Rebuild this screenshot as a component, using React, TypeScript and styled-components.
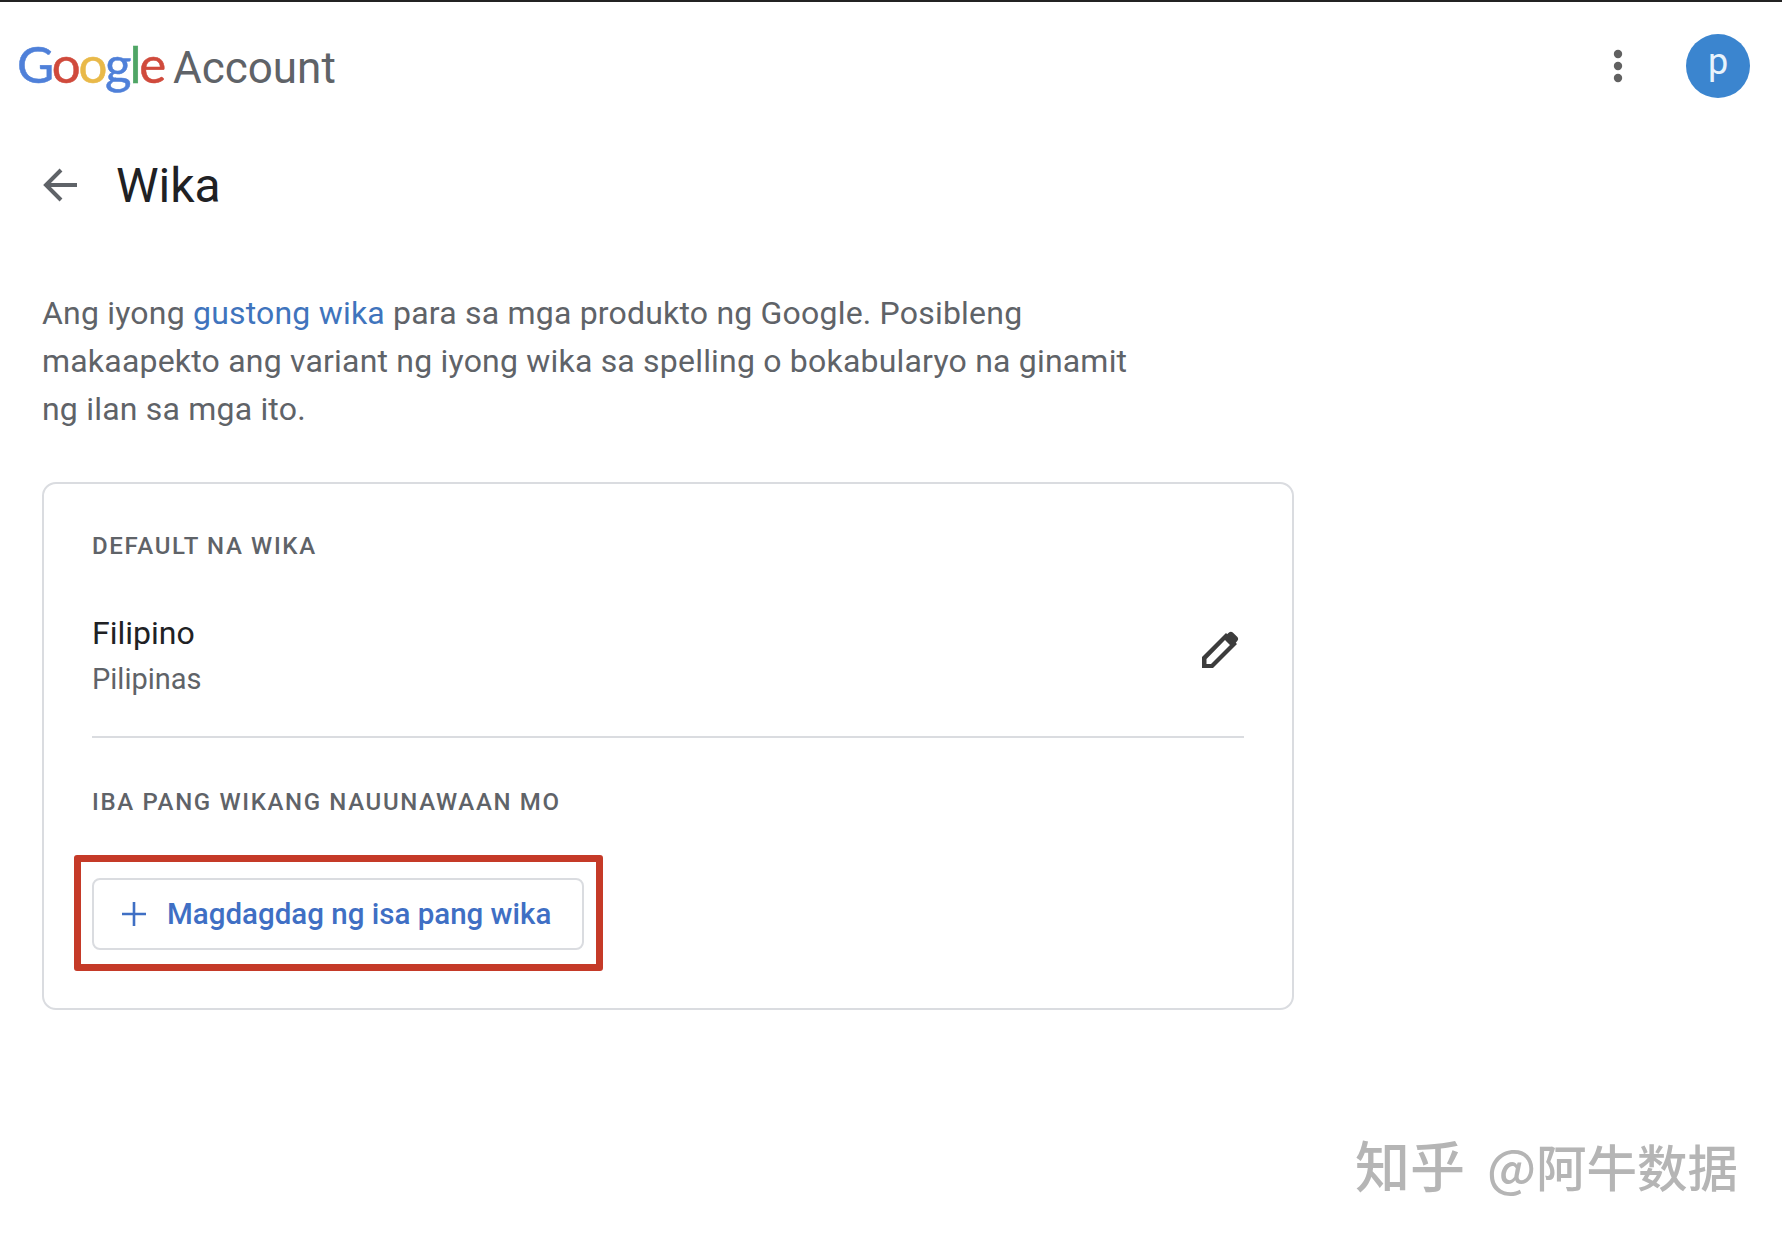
import React from "react";
import styled, { createGlobalStyle } from "styled-components";

const Global = createGlobalStyle`
  html, body { margin: 0; padding: 0; background: #fff; }
  body { font-family: Roboto, "Liberation Sans", sans-serif; }
`;

const Page = styled.div`
  position: relative;
  width: 1782px;
  height: 1240px;
  box-sizing: border-box;
  border-top: 2px solid #232323;
  overflow: hidden;
  background: #fff;
`;

const Header = styled.header`
  display: flex;
  align-items: center;
  justify-content: space-between;
  height: 128px;
  padding: 0 32px 0 17px;
`;

const Logo = styled.div`
  display: flex;
  align-items: baseline;
  gap: 9px;
  margin-bottom: 6px;
`;

const Brand = styled.span`
  font-family: Lato, sans-serif;
  font-size: 51px;
  letter-spacing: -2.2px;
  -webkit-text-stroke: 0.5px currentColor;
`;

const Letter = styled.span<{ $c: string }>`
  color: ${(p) => p.$c};
`;

const Product = styled.span`
  color: #5f6368;
  font-family: Roboto, sans-serif;
  font-size: 44px;
`;

const HeaderActions = styled.div`
  display: flex;
  align-items: center;
  gap: 63px;
`;

const Avatar = styled.div`
  width: 64px;
  height: 64px;
  border-radius: 50%;
  background: #3b85cf;
  color: #e8f3fc;
  display: flex;
  align-items: center;
  justify-content: center;
  font-size: 36px;
  padding-bottom: 8px;
  box-sizing: border-box;
`;

const TitleRow = styled.div`
  display: flex;
  align-items: center;
  gap: 37px;
  padding-left: 43px;
  height: 56px;
  margin-top: 27px;
`;

const Title = styled.h1`
  margin: 0;
  font-weight: 400;
  font-size: 48px;
  color: #202124;
`;

const Intro = styled.p`
  margin: 76px 0 0 42px;
  width: 1110px;
  font-size: 32px;
  letter-spacing: 0.2px;
  line-height: 48px;
  color: #5f6368;
`;

const Link = styled.span`
  color: #3f74bd;
`;

const Card = styled.section`
  margin: 49px 0 0 42px;
  width: 1252px;
  height: 528px;
  box-sizing: border-box;
  border: 2px solid #dadce0;
  border-radius: 14px;
  padding: 48px 48px 0;
`;

const SectionLabel = styled.div`
  font-size: 24px;
  line-height: 28px;
  font-weight: 500;
  letter-spacing: 1.65px;
  color: #5f6368;
  text-transform: uppercase;
`;

const LanguageRow = styled.div`
  display: flex;
  align-items: center;
  justify-content: space-between;
  margin-top: 50px;
  padding-bottom: 34px;
  border-bottom: 2px solid #dadce0;
`;

const LanguageName = styled.div`
  font-size: 32px;
  line-height: 46px;
  color: #202124;
`;

const LanguageRegion = styled.div`
  font-size: 29px;
  line-height: 46px;
  color: #5f6368;
`;

const EditIcon = styled.svg`
  margin: 0 5px 12px 0;
`;

const OtherLabel = styled(SectionLabel)`
  margin-top: 50px;
`;

const AddWrap = styled.div`
  position: relative;
  width: 492px;
  margin-top: 62px;
`;

const AddButton = styled.button`
  display: flex;
  align-items: center;
  gap: 20px;
  width: 492px;
  height: 72px;
  box-sizing: border-box;
  border: 2px solid #dadce0;
  border-radius: 8px;
  background: #fff;
  padding: 0 0 0 27px;
  font-family: Roboto, sans-serif;
  font-size: 29.5px;
  font-weight: 500;
  color: #3f6fc4;
`;

const Highlight = styled.div`
  position: absolute;
  left: -18px;
  top: -23px;
  right: -19px;
  bottom: -21px;
  border: 7px solid #c53a28;
  border-radius: 3px;
  pointer-events: none;
`;

const Watermark = styled.div`
  position: absolute;
  left: 1355px;
  top: 1129px;
  display: flex;
  align-items: baseline;
  gap: 22px;
  font-family: "Noto Sans CJK SC", sans-serif;
  font-weight: 500;
  line-height: 64px;
  color: #b5b5b5;
  white-space: nowrap;
`;

const WatermarkBrand = styled.span`
  font-size: 55px;
`;

const WatermarkUser = styled.span`
  font-size: 50.5px;
`;

export default function App() {
  return (
    <Page>
      <Global />
      <Header>
        <Logo>
          <Brand>
            <Letter $c="#4f80d9">G</Letter>
            <Letter $c="#d04a3c">o</Letter>
            <Letter $c="#e9b949">o</Letter>
            <Letter $c="#4f80d9">g</Letter>
            <Letter $c="#4fa565">l</Letter>
            <Letter $c="#d04a3c">e</Letter>
          </Brand>
          <Product>Account</Product>
        </Logo>
        <HeaderActions>
          <svg width="10" height="34" viewBox="0 0 10 34">
            <circle cx="5" cy="5" r="4.2" fill="#616161" />
            <circle cx="5" cy="17" r="4.2" fill="#616161" />
            <circle cx="5" cy="29" r="4.2" fill="#616161" />
          </svg>
          <Avatar>p</Avatar>
        </HeaderActions>
      </Header>
      <TitleRow>
        <svg width="36" height="34" viewBox="0 0 36 34" fill="none" stroke="#5f6368" strokeWidth="4">
          <path d="M34 17H4M18 2 3 17l15 15" />
        </svg>
        <Title>Wika</Title>
      </TitleRow>
      <Intro>
        Ang iyong <Link>gustong wika</Link> para sa mga produkto ng Google. Posibleng makaapekto ang variant ng iyong wika sa spelling o bokabularyo na ginamit ng ilan sa mga ito.
      </Intro>
      <Card>
        <SectionLabel>Default na wika</SectionLabel>
        <LanguageRow>
          <div>
            <LanguageName>Filipino</LanguageName>
            <LanguageRegion>Pilipinas</LanguageRegion>
          </div>
          <EditIcon width="38" height="38" viewBox="0 0 38 38">
            <path d="M1 37V26L25 2 36 13 12 37Z M5.5 33h4.5L29 14l-5-5L5.5 28Z" fill="#3c3c3c" fillRule="evenodd" />
            <path d="M28 1.5c1.2-1 2.6-1 3.8 0l4.6 4.4c1 1.2 1 2.6 0 3.8L33 14 24 5Z" fill="#3c3c3c" />
          </EditIcon>
        </LanguageRow>
        <OtherLabel>Iba pang wikang nauunawaan mo</OtherLabel>
        <AddWrap>
          <AddButton>
            <svg width="26" height="26" viewBox="0 0 26 26" stroke="#3f6fc4" strokeWidth="2.6">
              <path d="M13 1v24M1 13h24" />
            </svg>
            Magdagdag ng isa pang wika
          </AddButton>
          <Highlight />
        </AddWrap>
      </Card>
      <Watermark>
        <WatermarkBrand>知乎</WatermarkBrand>
        <WatermarkUser>@阿牛数据</WatermarkUser>
      </Watermark>
    </Page>
  );
}
